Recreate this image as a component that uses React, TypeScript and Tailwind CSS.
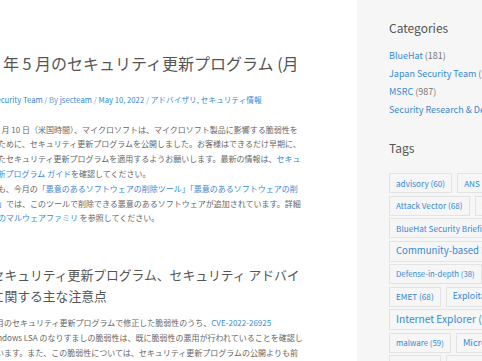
import React from "react";

const LINK = "text-[#3789d4]";

type Seg = { t: string; link?: boolean };

const INTRO: Seg[][] = [
  [{ t: "2022 年 5 月 10 日（米国時間）、マイクロソフトは、マイクロソフト製品に影響する脆弱性を" }],
  [{ t: "修正するために、セキュリティ更新プログラムを公開しました。お客様はできるだけ早期に、" }],
  [{ t: "公開されたセキュリティ更新プログラムを適用するようお願いします。最新の情報は、" }, { t: "セキュ", link: true }],
  [{ t: "リティ更新プログラム ガイド", link: true }, { t: "を確認してください。" }],
  [{ t: "その他にも、今月の" }, { t: "「悪意のあるソフトウェアの削除ツール」「悪意のあるソフトウェアの削", link: true }],
  [{ t: "除ツール」", link: true }, { t: "では、このツールで削除できる悪意のあるソフトウェアが追加されています。詳細" }],
  [{ t: "は、" }, { t: "各種のマルウェアファミリ", link: true }, { t: " を参照してください。" }],
];

const NOTE: Seg[][] = [
  [{ t: "今月のセキュリティ更新プログラムで修正した脆弱性のうち、" }, { t: "CVE-2022-26925", link: true }],
  [{ t: "Windows LSA のなりすましの脆弱性は、既に脆弱性の悪用が行われていることを確認し" }],
  [{ t: "ています。また、この脆弱性については、セキュリティ更新プログラムの公開よりも前" }],
];

const CATEGORIES = [
  { name: "BlueHat", count: 181 },
  { name: "Japan Security Team", count: 950 },
  { name: "MSRC", count: 987 },
  { name: "Security Research & Defense", count: 412 },
];

const TAGS = [
  { label: "advisory (60)", cls: "text-[8.2px] h-[20px]" },
  { label: "ANS (47)", cls: "text-[8.2px] h-[20px]" },
  { label: "Attack Vector (68)", cls: "text-[8.2px] h-[20px]" },
  { label: "BlueHat (181)", cls: "text-[8.2px] h-[20px]" },
  { label: "BlueHat Security Briefings (29)", cls: "text-[8.2px] h-[20px]" },
  { label: "Community-based Defense (41)", cls: "text-[9.6px] h-[21px]" },
  { label: "Defense-in-depth (38)", cls: "text-[7.8px] h-[20px]" },
  { label: "Developers (41)", cls: "text-[8.2px] h-[20px]" },
  { label: "EMET (68)", cls: "text-[8.2px] h-[20px]" },
  { label: "Exploitability Index (109)", cls: "text-[8.8px] h-[20px]" },
  { label: "Internet Explorer (IE) (127)", cls: "text-[10.2px] h-[21px]" },
  { label: "malware (59)", cls: "text-[7.9px] h-[20px]" },
  { label: "Microsoft Edge (82)", cls: "text-[9.2px] h-[20px]" },
  { label: "MSRC (97)", cls: "text-[8.2px] h-[20px]" },
  { label: "Patch Tuesday (88)", cls: "text-[8.2px] h-[20px]" },
];

function Lines({ lines }: { lines: Seg[][] }) {
  return (
    <>
      {lines.map((line, i) => (
        <div key={i} className="whitespace-nowrap">
          {line.map((s, j) => (
            <span key={j} className={s.link ? LINK : undefined}>{s.t}</span>
          ))}
        </div>
      ))}
    </>
  );
}

export default function App() {
  return (
    <div className="flex h-[361px] w-[482px] overflow-hidden bg-white font-['Noto_Sans_CJK_JP',sans-serif]">
      {/* Article */}
      <main className="w-[357px] shrink-0">
        <div className="-ml-[32px] pt-[52px]">
          <h1 className="whitespace-nowrap pl-[35px] text-[16px] leading-[22px] text-[#555]">
            年 5 月のセキュリティ更新プログラム (月
          </h1>

          <div className={`mt-[20px] whitespace-nowrap text-[7.7px] leading-[12px] ${LINK}`}>
            Japan Security Team <span className="text-[#6a9fd0]">/ By</span> jsecteam{" "}
            <span className="text-[#6a9fd0]">/</span> May 10, 2022{" "}
            <span className="text-[#6a9fd0]">/</span> アドバイザリ, セキュリティ情報
          </div>

          <div className="-ml-[2px] mt-[16.6px] text-[8px] leading-[14.8px] text-[#666]">
            <Lines lines={INTRO} />
          </div>

          <h2 className="-ml-[2px] mt-[39px] text-[12.8px] leading-[20.5px] text-[#555]">
            <div className="whitespace-nowrap">月のセキュリティ更新プログラム、セキュリティ アドバイ</div>
            <div className="whitespace-nowrap">ザリに関する主な注意点</div>
          </h2>

          <ul className="mt-[8.5px] pl-[20px] text-[8px] leading-[15px] text-[#666]">
            <li>
              <Lines lines={NOTE} />
            </li>
          </ul>
        </div>
      </main>

      {/* Sidebar */}
      <aside className="w-[260px] shrink-0 bg-[#f6f6f6] pl-[32px] pt-[20px]">
        <h3 className="text-[12px] leading-[16px] text-[#555]">Categories</h3>
        <ul className="mt-[11px] text-[9px] leading-[18px]">
          {CATEGORIES.map((c) => (
            <li key={c.name} className="whitespace-nowrap text-[#777]">
              <span className={LINK}>{c.name}</span> ({c.count})
            </li>
          ))}
        </ul>

        <h3 className="mt-[21px] text-[12px] leading-[16px] text-[#555]">Tags</h3>
        <div className="mt-[17px] flex w-[183px] flex-wrap gap-x-[5px] gap-y-[2.5px]">
          {TAGS.map((t) => (
            <span
              key={t.label}
              className={`flex items-center whitespace-nowrap border border-[#e3e3e3] px-[6px] leading-none ${LINK} ${t.cls}`}
            >
              {t.label}
            </span>
          ))}
        </div>
      </aside>
    </div>
  );
}
